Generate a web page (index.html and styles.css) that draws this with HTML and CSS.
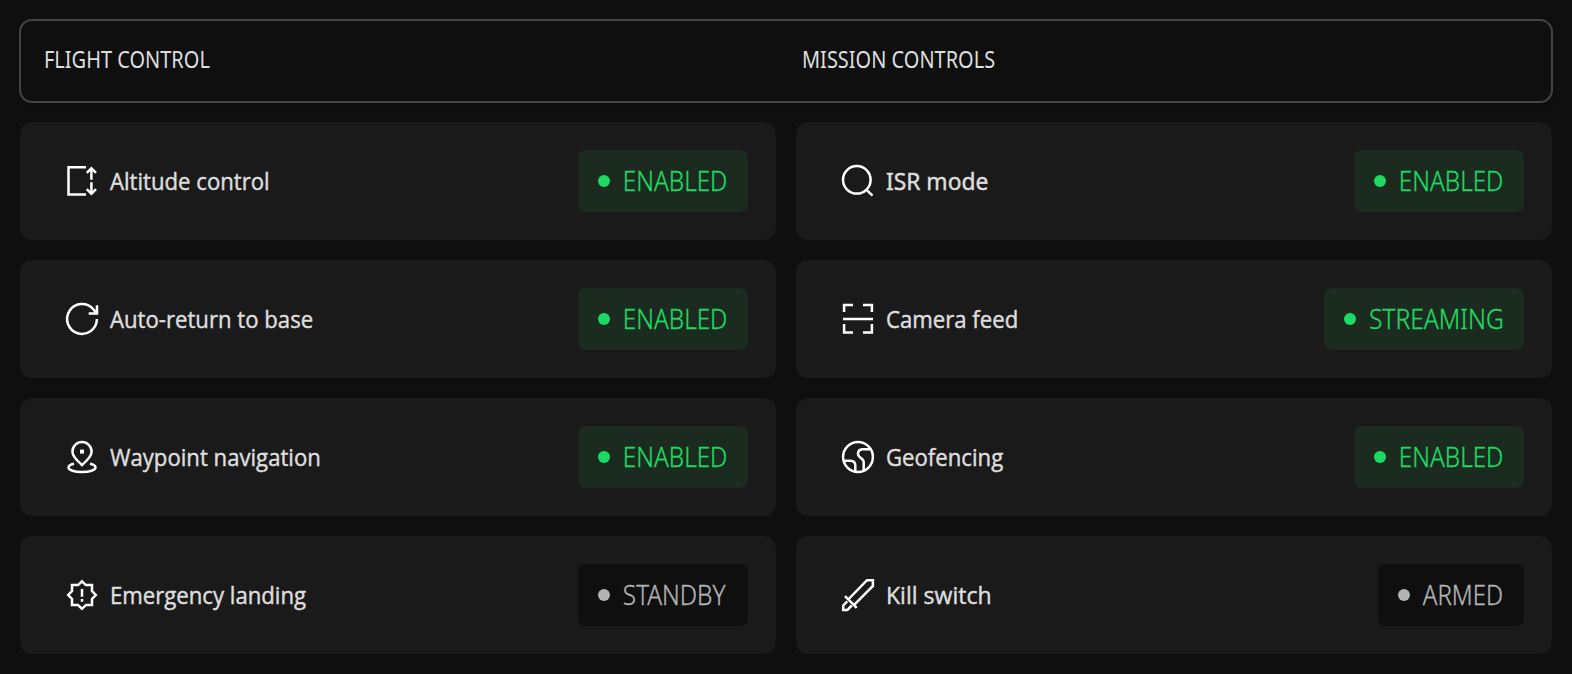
FILE: index.html
```html
<!DOCTYPE html>
<html lang="en">
<head>
<meta charset="utf-8">
<title>Controls</title>
<link rel="stylesheet" href="styles.css">
</head>
<body>
<main class="panel">
  <header class="head"><div class="head-cell"><span class="cond">FLIGHT CONTROL</span></div><div class="head-cell"><span class="cond">MISSION CONTROLS</span></div></header>
  <section class="grid">
    <div class="card">
      <svg class="icon" viewBox="0 0 36 36"><path d="M22 4.2H4.5V31.5H22M27.4 16.7V5M22.8 9.8L27.4 5.2L32 9.8M27.4 19.3V31M22.8 26.2L27.4 30.8L32 26.2"/></svg>
      <span class="label">Altitude control</span>
      <div class="badge on"><i class="dot"></i><span class="cond w106">ENABLED</span></div>
    </div>
    <div class="card">
      <svg class="icon" viewBox="0 0 36 36"><circle cx="16.8" cy="16.8" r="13.8"/><path d="M26 26.3L32.5 32.6"/></svg>
      <span class="label serif-i">ISR mode</span>
      <div class="badge on"><i class="dot"></i><span class="cond w106">ENABLED</span></div>
    </div>
    <div class="card">
      <svg class="icon" viewBox="0 0 36 36"><path d="M32.9 18A14.9 14.9 0 1 1 29.5 8.5L32.5 12M33 4.3V12.4H24.7"/></svg>
      <span class="label">Auto-return to base</span>
      <div class="badge on"><i class="dot"></i><span class="cond w106">ENABLED</span></div>
    </div>
    <div class="card">
      <svg class="icon" viewBox="0 0 36 36"><path d="M13 4.1H4.1V11M23 4.1H31.9V11M4.1 23V31.6H13M31.9 23V31.6H23M3 18H33"/></svg>
      <span class="label">Camera feed</span>
      <div class="badge on"><i class="dot"></i><span class="cond w136">STREAMING</span></div>
    </div>
    <div class="card">
      <svg class="icon" viewBox="0 0 36 36"><path d="M18 26C13.8 22.4 8.4 18 8.4 12.6A9.6 9.5 0 0 1 27.6 12.6C27.6 18 22.2 22.4 18 26ZM10 24.8C6.5 25.5 4.5 27 4.5 28.6C4.5 31.2 10.5 33 18 33S31.5 31.2 31.5 28.6C31.5 27 29.5 25.5 26 24.8"/><path class="fill" d="M16 10.6H20V14.6H16Z"/></svg>
      <span class="label">Waypoint navigation</span>
      <div class="badge on"><i class="dot"></i><span class="cond w106">ENABLED</span></div>
    </div>
    <div class="card">
      <svg class="icon" viewBox="0 0 36 36"><circle cx="18" cy="18" r="14.9"/><path d="M31.3 10.3H22.5C18.5 10.3 16.5 14.7 19.3 17.7L22.3 20.3C23.3 21.2 23.7 22 23.7 23.3V31.7M3 21.7H10.3C13.4 21.7 15.3 23.6 15.3 26.7V32.7"/></svg>
      <span class="label">Geofencing</span>
      <div class="badge on"><i class="dot"></i><span class="cond w106">ENABLED</span></div>
    </div>
    <div class="card">
      <svg class="icon" viewBox="0 0 36 36"><path d="M18 4.3L21.9 8.1H28V14.1L31.8 18L28 21.9V28H21.9L18 31.8L14.1 28H8V21.9L4.2 18L8 14.1V8.1H14.1ZM18 12V19.7M18 22V24.7"/></svg>
      <span class="label">Emergency landing</span>
      <div class="badge"><i class="dot"></i><span class="cond w106">STANDBY</span></div>
    </div>
    <div class="card">
      <svg class="icon" viewBox="0 0 36 36"><path d="M8.7 22L27 3.2H32.9V9L14.4 27.7M5 19.2L16.7 30.9M7.3 24.3L3.2 28.5V32.9H7.4L11.8 28.5"/></svg>
      <span class="label kill">Kill switch</span>
      <div class="badge"><i class="dot"></i><span class="cond w82">ARMED</span></div>
    </div>
  </section>
</main>
</body>
</html>
```
FILE: styles.css
```css
* { box-sizing: border-box; }
body { margin: 0; background: #0f0f0f; font-family: "Open Sans", sans-serif; }
.panel { padding: 19px 19px 20px; }
.head { display: grid; grid-template-columns: 1fr 1fr; height: 84px; padding-bottom: 5px; border: 2px solid #444; border-radius: 13px; align-items: center; box-shadow: 0 3px 4px rgba(0,0,0,.2); color: #dedede; font-size: 23.5px; }
.head-cell { padding-left: 23px; }
.head-cell + .head-cell { padding-left: 16px; }
.cond { display: inline-block; font-family: "Noto Sans", sans-serif; white-space: nowrap; transform: scaleX(.85); transform-origin: 0 50%; }
.grid { display: grid; grid-template-columns: 1fr 1fr; gap: 20px; margin: 19px 1px 0; }
.card { height: 118px; display: flex; align-items: center; padding: 0 28px 0 44px; background: #1a1a1a; border-radius: 12px; }
.icon { width: 36px; height: 36px; flex: none; fill: none; stroke: #fff; stroke-width: 2.5; }
.icon .fill { fill: #fff; stroke: none; }
.label { margin-left: 10px; padding-bottom: 2px; font-size: 24px; color: #dedede; white-space: nowrap; -webkit-text-stroke: .45px #dedede; transform: scaleX(.923); transform-origin: 0 50%; }
.label.serif-i { font-family: "Noto Sans", sans-serif; transform: scaleX(.95); }
.label.kill { transform: scaleX(.96); }
.badge { margin-left: auto; height: 62px; display: flex; align-items: center; gap: 12px; padding: 0 20px; border-radius: 8px; background: #0f0f0f; color: #b3b3b3; font-size: 28px; font-weight: 300; }
.badge.on { background: #1c2b20; color: #1fd861; }
.badge .cond { padding: 0 0 3px 1px; transform: scaleX(.868); -webkit-text-stroke: .35px currentColor; }
.dot { width: 12px; height: 12px; border-radius: 50%; background: currentColor; }
.w106 { width: 106px; }
.badge .w136 { width: 136px; transform: scaleX(.88); }
.badge .w82 { width: 82px; transform: scaleX(.855); }
```
